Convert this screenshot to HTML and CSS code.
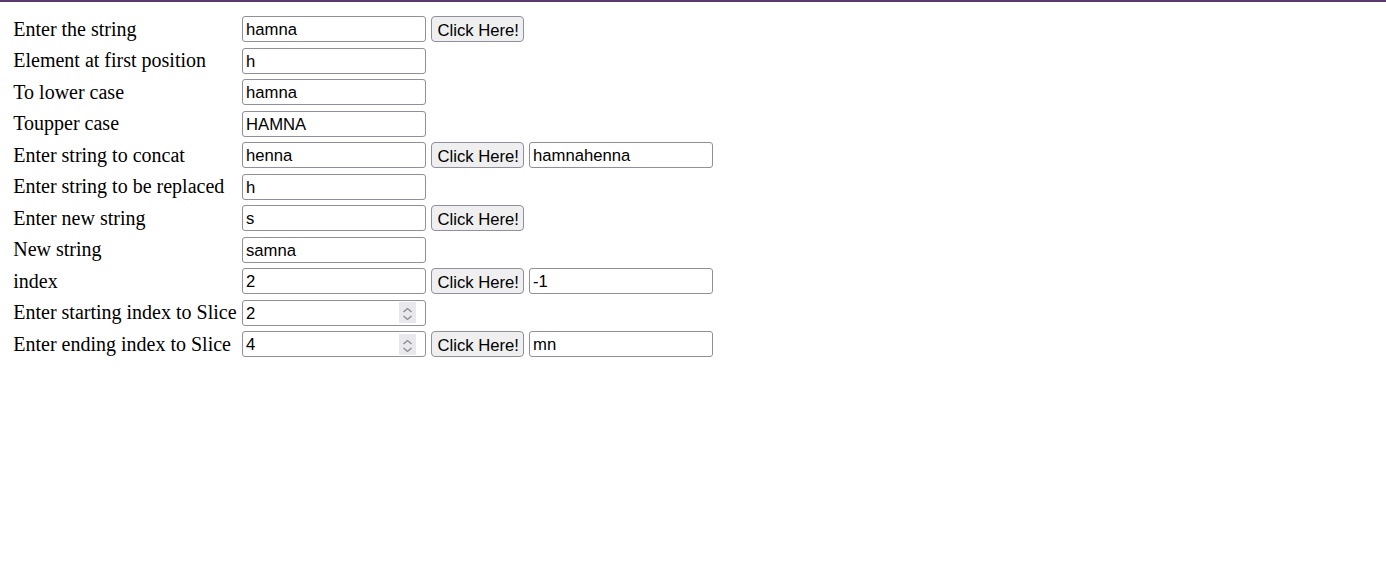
FILE: index.html
```html
<!DOCTYPE html>
<html>
<head>
<meta charset="utf-8">
<title>String functions</title>
<link rel="stylesheet" href="styles.css">
</head>
<body>
<table class="form">
  <tr><td class="lbl">Enter the string</td><td><input class="fld" type="text" value="hamna"></td><td><button class="btn">Click Here!</button></td></tr>
  <tr><td class="lbl">Element at first position</td><td><input class="fld" type="text" value="h"></td></tr>
  <tr><td class="lbl">To lower case</td><td><input class="fld" type="text" value="hamna"></td></tr>
  <tr><td class="lbl">Toupper case</td><td><input class="fld" type="text" value="HAMNA"></td></tr>
  <tr><td class="lbl">Enter string to concat</td><td><input class="fld" type="text" value="henna"></td><td><button class="btn">Click Here!</button></td><td><input class="fld" type="text" value="hamnahenna"></td></tr>
  <tr><td class="lbl">Enter string to be replaced</td><td><input class="fld" type="text" value="h"></td></tr>
  <tr><td class="lbl">Enter new string</td><td><input class="fld" type="text" value="s"></td><td><button class="btn">Click Here!</button></td></tr>
  <tr><td class="lbl">New string</td><td><input class="fld" type="text" value="samna"></td></tr>
  <tr><td class="lbl">index</td><td><input class="fld" type="text" value="2"></td><td><button class="btn">Click Here!</button></td><td><input class="fld" type="text" value="-1"></td></tr>
  <tr><td class="lbl">Enter starting index to Slice</td><td><span class="num"><input class="fld" type="number" value="2"><span class="spin"><svg width="17" height="21" viewBox="0 0 17 21"><path d="M4.5 10 L8.5 6.5 L12.5 10 M4.5 14 L8.5 17.5 L12.5 14" fill="none" stroke="#8a8a8a" stroke-width="1.3"/></svg></span></span></td></tr>
  <tr><td class="lbl">Enter ending index to Slice</td><td><span class="num"><input class="fld" type="number" value="4"><span class="spin"><svg width="17" height="21" viewBox="0 0 17 21"><path d="M4.5 10 L8.5 6.5 L12.5 10 M4.5 14 L8.5 17.5 L12.5 14" fill="none" stroke="#8a8a8a" stroke-width="1.3"/></svg></span></span></td><td><button class="btn">Click Here!</button></td><td><input class="fld" type="text" value="mn"></td></tr>
</table>
</body>
</html>
```
FILE: styles.css
```css
html {
  border-top: 2px solid #5b3a6d;
  background: #ffffff;
}
body {
  margin: 10px;
  font-family: "Liberation Serif", "Times New Roman", serif;
  font-size: 20px;
  color: #000000;
}
.form {
  border-collapse: separate;
  border-spacing: 2.5px 3px;
}
.form td {
  padding: 1.25px;
  vertical-align: middle;
  white-space: nowrap;
}
.lbl {
  line-height: 23px;
}
.form td.lbl {
  padding-right: 2.25px;
}
.fld {
  box-sizing: border-box;
  width: 184px;
  height: 26px;
  margin: 0;
  padding: 2px 3px 0;
  border: 1px solid #8f8f9d;
  border-radius: 3px;
  font-family: "Liberation Sans", Arial, sans-serif;
  font-size: 16.67px;
  color: #000000;
  background: #ffffff;
  display: block;
}
.fld::-webkit-inner-spin-button,
.fld::-webkit-outer-spin-button {
  -webkit-appearance: none;
  margin: 0;
}
.num {
  position: relative;
  display: block;
  width: 184px;
}
.spin {
  position: absolute;
  top: 2.5px;
  right: 10px;
  width: 17px;
  height: 21px;
  background: #e9e9ed;
  display: block;
}
.spin svg {
  display: block;
}
.btn {
  box-sizing: border-box;
  display: block;
  width: 93px;
  height: 26px;
  margin: 0 1px 0 0;
  padding: 3px 6px 0;
  border: 1px solid #8f8f9d;
  border-radius: 4px;
  background: #efefef;
  font-family: "Liberation Sans", Arial, sans-serif;
  font-size: 16.67px;
  color: #000000;
}
```
